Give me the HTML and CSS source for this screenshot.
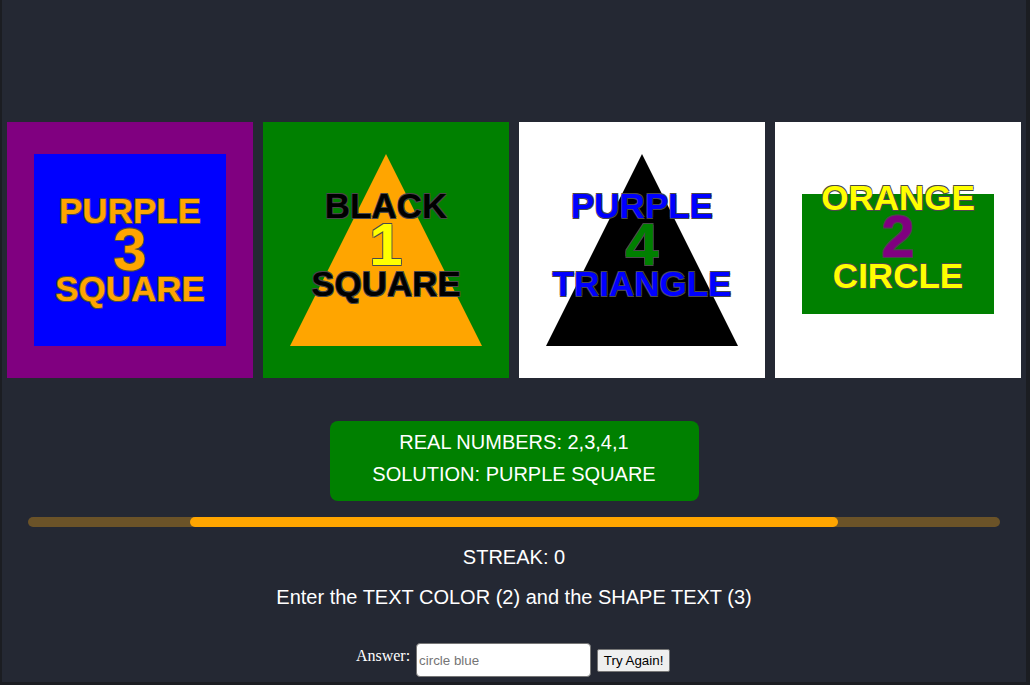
FILE: index.html
```html
<!DOCTYPE html>
<html lang="en">
<head>
<meta charset="utf-8">
<title>Color Shape Game</title>
<link rel="stylesheet" href="styles.css">
</head>
<body>
<div class="frame">
  <div class="cards">
    <div class="card bg-purple">
      <div class="shape square fill-blue"></div>
      <div class="label">
        <div class="word t-orange">PURPLE</div>
        <div class="num t-orange">3</div>
        <div class="word t-orange">SQUARE</div>
      </div>
    </div>
    <div class="card bg-green">
      <div class="shape triangle fill-orange"></div>
      <div class="label lift-5">
        <div class="word t-black">BLACK</div>
        <div class="num t-yellow">1</div>
        <div class="word t-black">SQUARE</div>
      </div>
    </div>
    <div class="card bg-white">
      <div class="shape triangle fill-black"></div>
      <div class="label lift-5">
        <div class="word t-blue">PURPLE</div>
        <div class="num t-green">4</div>
        <div class="word t-blue">TRIANGLE</div>
      </div>
    </div>
    <div class="card bg-white">
      <div class="shape rect fill-green"></div>
      <div class="label lift-13">
        <div class="word t-yellow">ORANGE</div>
        <div class="num t-purple">2</div>
        <div class="word t-yellow">CIRCLE</div>
      </div>
    </div>
  </div>

  <div class="info">
    <p>REAL NUMBERS: 2,3,4,1</p>
    <p>SOLUTION: PURPLE SQUARE</p>
  </div>

  <div class="track"><div class="fill" style="width: 66.67%"></div></div>

  <p class="line streak">STREAK: 0</p>
  <p class="line prompt">Enter the TEXT COLOR (2) and the SHAPE TEXT (3)</p>

  <div class="answer">
    <label class="answer-label" for="ans">Answer:</label>
    <input id="ans" class="answer-input" type="text" placeholder="circle blue">
    <button class="answer-btn" type="button">Try Again!</button>
  </div>
</div>
</body>
</html>
```

FILE: styles.css
```css
html, body {
  margin: 0;
  padding: 0;
  background: #1c1f25;
}

.frame {
  box-sizing: border-box;
  height: 685px;
  background: #242833;
  border-left: 2px solid #1b1d22;
  border-right: 4px solid #1b1d22;
  border-bottom: 3px solid #1b1d22;
  padding-top: 122px;
  font-family: "Liberation Sans", Arial, sans-serif;
  color: #fff;
  overflow: hidden;
}

.cards {
  display: flex;
  justify-content: center;
  gap: 10px;
}

.card {
  flex: 0 0 246px;
  height: 256px;
  display: grid;
  place-items: center;
}

.card > * {
  grid-area: 1 / 1;
}

.bg-purple { background: #800080; }
.bg-green { background: #008000; }
.bg-white { background: #ffffff; }

.shape { width: 192px; height: 192px; z-index: 0; }
.shape.rect { height: 120px; margin-top: 8px; }
.shape.triangle { clip-path: polygon(50% 0, 100% 100%, 0 100%); }

.fill-blue { background: #0000ff; }
.fill-orange { background: #ffa500; }
.fill-black { background: #000000; }
.fill-green { background: #008000; }

.label {
  z-index: 1;
  display: flex;
  flex-direction: column;
  align-items: center;
  font-weight: bold;
  text-shadow:
    0.7px 0.7px 0.5px #4a4a4a,
    -0.7px -0.7px 0.5px #4a4a4a,
    0.7px -0.7px 0.5px #4a4a4a,
    -0.7px 0.7px 0.5px #4a4a4a;
}

.lift-5 { margin-bottom: 10px; }
.lift-13 { margin-bottom: 26px; }

.word {
  font-size: 35px;
  line-height: 36px;
}

.num {
  font-size: 60px;
  line-height: 42px;
}

.t-orange { color: #ffa500; }
.t-black { color: #000000; }
.t-yellow { color: #ffff00; }
.t-blue { color: #0000ff; }
.t-green { color: #008000; }
.t-purple { color: #800080; }

.info {
  width: 369px;
  box-sizing: border-box;
  margin: 43px auto 0;
  padding: 5px 0 11px;
  background: #008000;
  border-radius: 8px;
  text-align: center;
  font-size: 20px;
  line-height: 32px;
}

.info p { margin: 0; }

.track {
  width: 972px;
  height: 10px;
  margin: 16px auto 0;
  border-radius: 5px;
  background: #6b5328;
  display: flex;
  justify-content: center;
}

.fill {
  height: 100%;
  border-radius: 5px;
  background: #ffa500;
}

.line {
  margin: 0;
  text-align: center;
  font-size: 20px;
  line-height: 24px;
}

.streak { margin-top: 18px; }
.prompt { margin-top: 16px; }

.answer {
  margin-top: 34px;
  padding-right: 2px;
  display: flex;
  justify-content: center;
  align-items: center;
  gap: 6px;
}

.answer-label {
  font-family: "Liberation Serif", "Times New Roman", serif;
  font-size: 16px;
  margin-bottom: 9px;
}

.answer-input {
  box-sizing: border-box;
  width: 175px;
  height: 34px;
  padding: 1px 2px;
  border: 1px solid #767676;
  border-radius: 4px;
  background: #fff;
  font-family: "Liberation Sans", Arial, sans-serif;
  font-size: 13.33px;
  color: #000;
}

.answer-input::placeholder { color: #757575; }

.answer-btn {
  box-sizing: border-box;
  width: 73px;
  height: 23px;
  padding: 1px 4px;
  border: 1px solid #767676;
  border-radius: 2px;
  background: #efefef;
  font-family: "Liberation Sans", Arial, sans-serif;
  font-size: 13.33px;
  color: #000;
}
```
